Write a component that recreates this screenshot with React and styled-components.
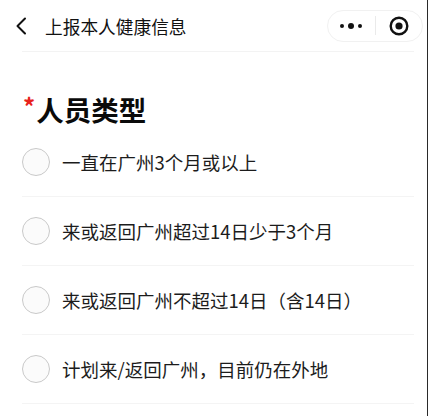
import styled, { createGlobalStyle } from 'styled-components';

const GlobalStyle = createGlobalStyle`
  html, body {
    margin: 0;
    padding: 0;
    background: #fff;
  }
  body {
    font-family: "Noto Sans CJK SC", "Noto Sans", sans-serif;
    color: #1a1a1a;
  }
`;

const Page = styled.div`
  width: 428px;
  height: 416px;
  box-sizing: border-box;
  border-right: 1px solid #2a2a2a;
  overflow: hidden;
  background: #fff;
`;

const NavBar = styled.header`
  height: 51px;
  display: flex;
  align-items: center;
  padding: 0 4px 0 15px;
`;

const BackButton = styled.span`
  display: flex;
  align-items: center;
  width: 30px;
`;

const NavTitle = styled.h1`
  margin: 0;
  font-size: 17.7px;
  font-weight: 400;
  color: #111;
`;

const Capsule = styled.div`
  margin-left: auto;
  width: 96px;
  height: 32px;
  box-sizing: border-box;
  border: 1px solid #f1f1f1;
  border-radius: 16px;
  display: flex;
  align-items: center;
`;

const CapsuleHalf = styled.span`
  flex: 1;
  display: flex;
  align-items: center;
  justify-content: center;
`;

const CapsuleDivider = styled.span`
  width: 1px;
  height: 19px;
  background: #eaeaea;
`;

const NavLine = styled.div`
  height: 1px;
  margin: 0 13px 0 22px;
  background: #f3f3f3;
`;

const Heading = styled.h2`
  margin: 0;
  padding: 39px 0 1px 23px;
  height: 36px;
  display: flex;
  align-items: center;
  font-size: 27.5px;
  font-weight: 700;
  color: #0a0a0a;
  line-height: 36px;
`;

const Required = styled.span`
  color: #e8221b;
  font-size: 24px;
  font-weight: 700;
  align-self: flex-start;
  line-height: 24px;
  margin: 3px 1px 0 0;
`;

const OptionList = styled.div`
  margin: 0 13px 0 22px;
`;

const Option = styled.label`
  display: flex;
  align-items: center;
  height: 68px;
  border-bottom: 1px solid #f4f4f4;
`;

const Radio = styled.span`
  width: 28px;
  height: 28px;
  box-sizing: border-box;
  border-radius: 50%;
  border: 1.5px solid #c9c9c9;
  background: #fbfbfb;
  flex-shrink: 0;
`;

const OptionText = styled.span`
  margin-left: 12px;
  font-size: 18.5px;
  color: #1c1c1c;
  line-height: 24px;
`;

const options = [
  '一直在广州3个月或以上',
  '来或返回广州超过14日少于3个月',
  '来或返回广州不超过14日（含14日）',
  '计划来/返回广州，目前仍在外地',
];

export default function App() {
  return (
    <Page>
      <GlobalStyle />
      <NavBar>
        <BackButton>
          <svg width="12" height="18" viewBox="0 0 12 18">
            <path d="M10 1.5 L2.5 9 L10 16.5" fill="none" stroke="#111" strokeWidth="2" strokeLinecap="round" strokeLinejoin="round" />
          </svg>
        </BackButton>
        <NavTitle>上报本人健康信息</NavTitle>
        <Capsule>
          <CapsuleHalf>
            <svg width="24" height="8" viewBox="0 0 24 8">
              <circle cx="3" cy="4" r="2" fill="#111" />
              <circle cx="12" cy="4" r="3" fill="#111" />
              <circle cx="21" cy="4" r="2" fill="#111" />
            </svg>
          </CapsuleHalf>
          <CapsuleDivider />
          <CapsuleHalf>
            <svg width="20" height="20" viewBox="0 0 20 20">
              <circle cx="10" cy="10" r="8.3" fill="none" stroke="#111" strokeWidth="2.4" />
              <circle cx="10" cy="10" r="3.6" fill="#111" />
            </svg>
          </CapsuleHalf>
        </Capsule>
      </NavBar>
      <NavLine />
      <Heading>
        <Required>*</Required>
        人员类型
      </Heading>
      <OptionList>
        {options.map((text) => (
          <Option key={text}>
            <Radio />
            <OptionText>{text}</OptionText>
          </Option>
        ))}
      </OptionList>
    </Page>
  );
}
